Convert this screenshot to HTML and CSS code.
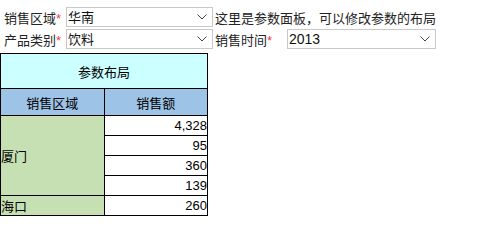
FILE: index.html
```html
<!DOCTYPE html>
<html>
	<head>
		<meta charset="utf-8">
		<title>参数面板</title>
		<link rel="stylesheet" href="styles.css">
	</head>
	<body>
		<div class="ParamPanel">
			<div class="ParamRow">
				<span class="Label">销售区域<span class="Req">*</span></span>
				<div class="SelectBox">
					<span class="SelectText">华南</span>
					<svg class="Chevron" width="10" height="6" viewBox="0 0 10 6"><path d="M0.5 0.5 L5 5 L9.5 0.5" fill="none" stroke="#444" stroke-width="1"/></svg>
				</div>
				<span class="Note">这里是参数面板，可以修改参数的布局</span>
			</div>
			<div class="ParamRow">
				<span class="Label">产品类别<span class="Req">*</span></span>
				<div class="SelectBox">
					<span class="SelectText">饮料</span>
					<svg class="Chevron" width="10" height="6" viewBox="0 0 10 6"><path d="M0.5 0.5 L5 5 L9.5 0.5" fill="none" stroke="#444" stroke-width="1"/></svg>
				</div>
				<span class="Label TimeLabel">销售时间<span class="Req">*</span></span>
				<div class="SelectBox YearBox">
					<span class="SelectText Num">2013</span>
					<svg class="Chevron" width="10" height="6" viewBox="0 0 10 6"><path d="M0.5 0.5 L5 5 L9.5 0.5" fill="none" stroke="#444" stroke-width="1"/></svg>
				</div>
			</div>
		</div>

		<table class="Report">
			<tr class="TitleRow">
				<td colspan="2">参数布局</td>
			</tr>
			<tr class="HeadRow">
				<td>销售区域</td>
				<td>销售额</td>
			</tr>
			<tr class="DataRow">
				<td class="City" rowspan="4">厦门</td>
				<td class="Amount">4,328</td>
			</tr>
			<tr class="DataRow">
				<td class="Amount">95</td>
			</tr>
			<tr class="DataRow">
				<td class="Amount">360</td>
			</tr>
			<tr class="DataRow">
				<td class="Amount">139</td>
			</tr>
			<tr class="DataRow">
				<td class="City">海口</td>
				<td class="Amount">260</td>
			</tr>
		</table>
	</body>
</html>
```

FILE: styles.css
```css
body {
	margin: 0;
	background: #fff;
	font-family: "Noto Sans CJK SC", "Liberation Sans", sans-serif;
	color: #000;
}

.ParamPanel {
	display: flex;
	flex-direction: column;
	gap: 2px;
	padding: 7px 0 0 4px;
}

.ParamRow {
	display: flex;
	align-items: center;
	height: 20px;
}

.Label {
	font-size: 13px;
	color: #222;
	width: 62px;
	white-space: nowrap;
}

.TimeLabel {
	width: 72px;
	margin-left: 2px;
}

.Req {
	color: #f03c3c;
	font-family: "Liberation Sans", sans-serif;
	font-size: 13px;
}

.SelectBox {
	box-sizing: border-box;
	display: flex;
	align-items: center;
	justify-content: space-between;
	width: 147px;
	height: 20px;
	border: 1px solid #c8c8c8;
	background: #fff;
	padding: 0 5px 0 1px;
}

.YearBox {
	width: 149px;
}

.SelectText {
	font-size: 13px;
	color: #111;
	line-height: 18px;
}

.Num {
	font-family: "Liberation Sans", sans-serif;
	font-size: 14px;
}

.Chevron {
	display: block;
}

.Note {
	font-size: 13px;
	color: #222;
	margin-left: 2px;
	white-space: nowrap;
}

.Report {
	border-collapse: collapse;
	margin-top: 4px;
	width: 208px;
	font-size: 13px;
	table-layout: fixed;
}

.Report td {
	border: 1px solid #000;
	padding: 0;
	line-height: 15px;
}

.TitleRow td {
	background: #ccffff;
	text-align: center;
	height: 34px;
}

.HeadRow td {
	background: #9dc3e6;
	text-align: center;
	height: 26px;
	width: 103px;
}

.DataRow td {
	height: 19px;
}

.City {
	background: #c6e0b4;
	text-align: left;
	vertical-align: middle;
}

.Amount {
	text-align: right;
	font-family: "Liberation Sans", sans-serif;
	padding-right: 1px;
}
```
